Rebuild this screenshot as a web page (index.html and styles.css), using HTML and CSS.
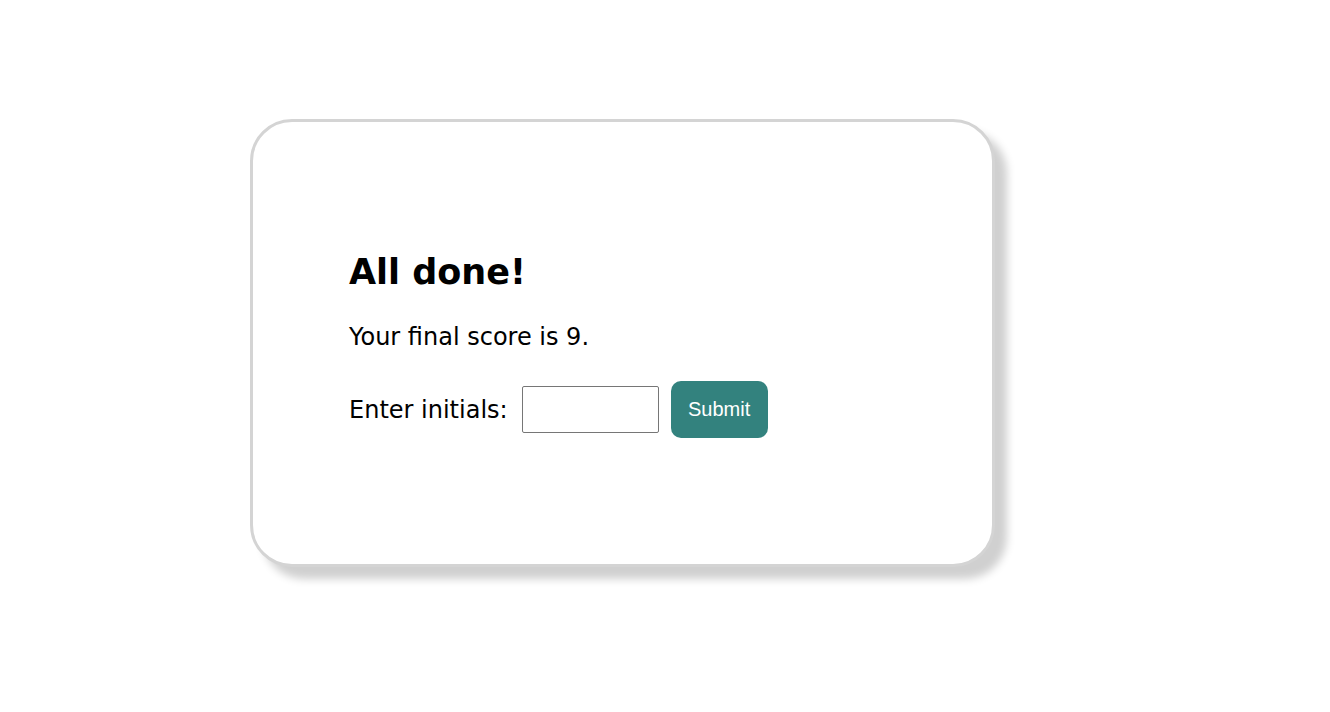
FILE: index.html
```html
<!DOCTYPE html>
<html>
<head>
<meta charset="utf-8">
<link rel="stylesheet" href="styles.css">
</head>
<body>
<main class="page">
  <section class="card">
    <h1 class="title">All done!</h1>
    <p class="score">Your final score is 9.</p>
    <form class="form">
      <label class="label" for="initials">Enter initials:</label>
      <input class="input" id="initials" type="text">
      <button class="submit" type="button">Submit</button>
    </form>
  </section>
</main>
</body>
</html>
```
FILE: styles.css
```css
html, body {
  margin: 0;
  padding: 0;
  background: #fff;
}
body {
  font-family: "DejaVu Sans", Verdana, sans-serif;
  color: #000;
}
.page {
  padding: 119px 0 60px 250px;
}
.card {
  box-sizing: border-box;
  width: 745px;
  height: 448px;
  background: #fff;
  border: 3px solid #d4d4d4;
  border-radius: 42px;
  box-shadow: 12px 12px 8px #d0d0d0;
  padding: 126px 96px 0 96px;
}
.title {
  margin: 0;
  font-size: 35px;
  font-weight: bold;
  line-height: 48px;
}
.score {
  margin: 26px 0 0 0;
  font-size: 24px;
  line-height: 30px;
}
.form {
  display: flex;
  align-items: center;
  margin-top: 29px;
}
.label {
  font-size: 24px;
  margin-right: 14px;
}
.input {
  box-sizing: border-box;
  width: 137px;
  height: 47px;
  border: 1px solid #767676;
  border-radius: 2px;
  margin: 0 12px 0 0;
  padding: 0 6px;
}
.submit {
  box-sizing: border-box;
  width: 97px;
  height: 57px;
  border: none;
  border-radius: 10px;
  background: #33827e;
  color: #fff;
  font-family: "Liberation Sans", Arial, sans-serif;
  font-size: 20px;
}
```
